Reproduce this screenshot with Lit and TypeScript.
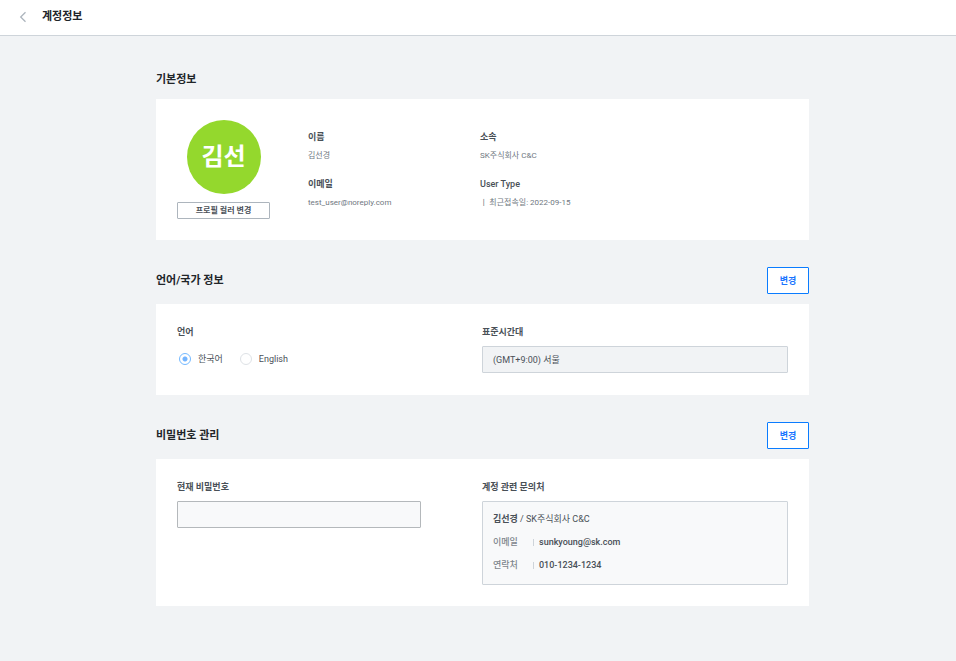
import { LitElement, html, css } from "lit";
import { customElement, state } from "lit/decorators.js";

@customElement("app-root")
export class AppRoot extends LitElement {
  static styles = css`
    :host {
      display: block;
      min-height: 100vh;
      background: #f1f3f5;
      color: #495057;
      font-family: Roboto, "Noto Sans CJK KR", sans-serif;
      font-size: 9px;
      line-height: 14px;
    }
    * {
      box-sizing: border-box;
    }
    h1, h2, h3, p, dl, dd, fieldset {
      margin: 0;
      padding: 0;
      border: 0;
    }
    h3 {
      font-size: 9px;
    }
    button, input {
      font: inherit;
      color: inherit;
      border-radius: 1px;
    }
    button {
      cursor: pointer;
    }
    .topbar {
      display: flex;
      align-items: center;
      gap: 11px;
      height: 36px;
      padding: 0 16px 2px;
      background: #fff;
      border-bottom: 1px solid #ced4da;
    }
    .back {
      display: flex;
      padding: 0;
      border: 0;
      background: none;
    }
    .title {
      color: #212529;
      font-size: 11px;
      font-weight: 700;
      line-height: 18px;
    }
    .content {
      display: flex;
      flex-direction: column;
      gap: 27px;
      padding: 35px 147px 55px 156px;
    }
    .section {
      display: flex;
      flex-direction: column;
      gap: 10px;
    }
    .head {
      display: flex;
      align-items: center;
      justify-content: space-between;
    }
    .change {
      width: 42px;
      height: 27px;
      padding: 0;
      border: 1px solid #0a7cff;
      background: #fff;
      color: #1a75ff;
      font-weight: 700;
    }
    .card {
      padding: 21px;
      background: #fff;
    }
    .profile {
      display: flex;
      gap: 38px;
    }
    .person {
      display: flex;
      flex-direction: column;
      align-items: center;
      gap: 8px;
      width: 93px;
    }
    .avatar {
      display: flex;
      align-items: center;
      justify-content: center;
      width: 74px;
      height: 74px;
      border-radius: 50%;
      background: #94d82d;
      color: #fff;
      font-size: 24px;
      font-weight: 700;
    }
    .color {
      width: 100%;
      height: 17px;
      padding: 0;
      border: 1px solid #adb5bd;
      background: #fff;
      font-size: 8px;
      font-weight: 700;
      line-height: 14px;
    }
    .facts {
      flex: 1;
      display: grid;
      grid-template-columns: 172px 1fr;
      gap: 14px 0;
      align-content: start;
      padding-top: 10px;
    }
    .fact {
      display: flex;
      flex-direction: column;
      gap: 5px;
    }
    .label {
      font-weight: 500;
    }
    .label:lang(ko) {
      font-weight: 700;
    }
    .value {
      color: #70787f;
      font-size: 8px;
    }
    .columns {
      display: grid;
      grid-template-columns: minmax(0, 1fr) 306px;
    }
    .field {
      display: flex;
      flex-direction: column;
      gap: 7px;
    }
    .choices {
      display: flex;
      align-items: center;
      gap: 17px;
      height: 28px;
      margin-top: 7px;
      padding: 0 2px 2px;
    }
    legend {
      padding: 0;
    }
    .choice {
      display: flex;
      align-items: center;
      gap: 7px;
    }
    .radio {
      appearance: none;
      width: 12px;
      height: 12px;
      margin: 0;
      border: 1px solid #dee2e6;
      border-radius: 50%;
      background: #fff;
    }
    .radio:checked {
      border-color: #74b9ff;
      background: radial-gradient(circle, #74b5ff 2px, #fff 3px);
    }
    .box {
      width: 100%;
      height: 27px;
      padding: 0 10px;
      border: 1px solid #ced4da;
      background: #f1f3f5;
      opacity: 1;
    }
    .password {
      width: 80%;
      border-color: #b4b8bb;
      background: #f8f9fa;
    }
    .contact {
      display: flex;
      flex-direction: column;
      gap: 9px;
      padding: 10px 10px 12px;
      border: 1px solid #ced4da;
      border-radius: 1px;
      background: #f8f9fa;
      font-weight: 500;
    }
    .contact p {
      font-weight: 400;
    }
    .contact b {
      font-weight: 700;
    }
    .row {
      display: flex;
      align-items: center;
    }
    .row dt {
      width: 40px;
      color: #7d858c;
    }
    .row dd {
      display: flex;
      align-items: center;
      gap: 5px;
    }
    .row dd::before {
      content: "";
      width: 1px;
      height: 7px;
      background: #ced4da;
    }
  `;

  @state() private language = "ko";

  private facts = [
    { label: "이름", value: "김선경", lang: "ko" },
    { label: "소속", value: "SK주식회사 C&C", lang: "ko" },
    { label: "이메일", value: "test_user@noreply.com", lang: "ko" },
    { label: "User Type", value: "ㅣ 최근접속일: 2022-09-15", lang: "en" },
  ];

  private languages = [
    { id: "ko", name: "한국어" },
    { id: "en", name: "English" },
  ];

  private contacts = [
    { label: "이메일", value: "sunkyoung@sk.com" },
    { label: "연락처", value: "010-1234-1234" },
  ];

  render() {
    return html`
      <header class="topbar" lang="ko">
        <button class="back" type="button" aria-label="뒤로">
          <svg width="15" height="14" viewBox="0 0 15 14" fill="none" stroke="#adb5bd" stroke-width="1.3">
            <path d="M9.5 2.2 4.7 7l4.8 4.8" />
          </svg>
        </button>
        <h1 class="title">계정정보</h1>
      </header>
      <main class="content" lang="ko">
        <section class="section">
          <div class="head"><h2 class="title">기본정보</h2></div>
          <div class="card profile">
            <div class="person">
              <div class="avatar">김선</div>
              <button class="color" type="button">프로필 컬러 변경</button>
            </div>
            <dl class="facts">
              ${this.facts.map(
                (f) => html`<div class="fact">
                  <dt class="label" lang=${f.lang}>${f.label}</dt>
                  <dd class="value">${f.value}</dd>
                </div>`
              )}
            </dl>
          </div>
        </section>
        <section class="section">
          <div class="head">
            <h2 class="title">언어/국가 정보</h2>
            <button class="change" type="button">변경</button>
          </div>
          <div class="card columns">
            <fieldset>
              <legend class="label">언어</legend>
              <div class="choices">
                ${this.languages.map(
                  (l) => html`<label class="choice">
                    <input
                      class="radio"
                      type="radio"
                      name="language"
                      .checked=${this.language === l.id}
                      @change=${() => (this.language = l.id)}
                    />
                    ${l.name}
                  </label>`
                )}
              </div>
            </fieldset>
            <div class="field">
              <label class="label" for="zone">표준시간대</label>
              <input class="box" id="zone" type="text" value="(GMT+9:00) 서울" disabled />
            </div>
          </div>
        </section>
        <section class="section">
          <div class="head">
            <h2 class="title">비밀번호 관리</h2>
            <button class="change" type="button">변경</button>
          </div>
          <div class="card columns">
            <div class="field">
              <label class="label" for="password">현재 비밀번호</label>
              <input class="box password" id="password" type="password" />
            </div>
            <div class="field">
              <h3 class="label">계정 관련 문의처</h3>
              <div class="contact">
                <p><b>김선경</b> / SK주식회사 C&amp;C</p>
                ${this.contacts.map(
                  (c) => html`<dl class="row">
                    <dt>${c.label}</dt>
                    <dd>${c.value}</dd>
                  </dl>`
                )}
              </div>
            </div>
          </div>
        </section>
      </main>
    `;
  }
}
